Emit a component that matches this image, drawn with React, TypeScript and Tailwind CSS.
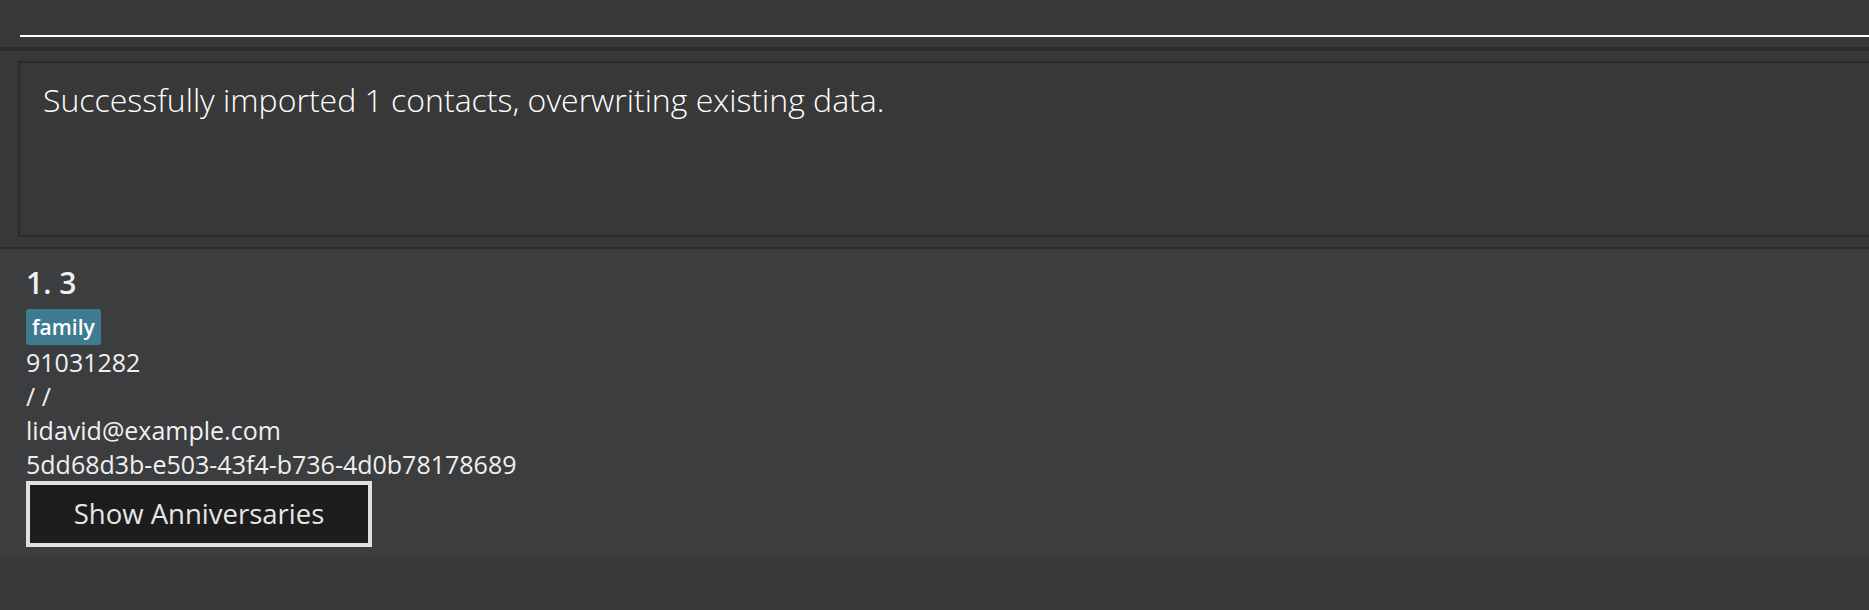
const font = { fontFamily: '"Open Sans", "Noto Sans", sans-serif' };

function CommandBox() {
  return (
    <div className="h-[47px] pl-5">
      <div className="h-[37px] border-b-2 border-white" />
    </div>
  );
}

function ResultDisplay({ message }: { message: string }) {
  return (
    <div className="pl-[18px] pt-[10px] pb-[10px]">
      <div className="h-[176px] border-2 border-r-0 border-[#2b2b2b] pl-[23px] pt-[17px]">
        <p className="text-[32px] leading-[40px] font-light text-white">{message}</p>
      </div>
    </div>
  );
}

interface PersonCardProps {
  index: number;
  person: {
    name: string;
    tags: string[];
    phone: string;
    address: string;
    email: string;
    id: string;
  };
}

function PersonCard({ index, person }: PersonCardProps) {
  return (
    <div className="bg-[#3c3d3f] h-[308px] pl-[26px] pt-[16px]">
      <h2 className="text-[30px] leading-[36px] font-semibold text-[#f0f0f0]">
        {index}. {person.name}
      </h2>
      <div className="flex gap-2 mt-2">
        {person.tags.map((tag) => (
          <span
            key={tag}
            className="h-[36px] px-[6px] rounded-[3px] bg-[#3e7b91] text-white text-[21px] leading-[36px] font-semibold"
          >
            {tag}
          </span>
        ))}
      </div>
      <div className="text-[25px] leading-[34px] text-[#f0f0f0]">
        <p>{person.phone}</p>
        <p>{person.address}</p>
        <p>{person.email}</p>
        <p>{person.id}</p>
      </div>
      <button className="w-[346px] h-[66px] border-4 border-[#e0e0e0] bg-[#1d1d1d] text-[#e6e6e6] text-[27.5px] leading-none">
        Show Anniversaries
      </button>
    </div>
  );
}

export default function App() {
  const person = {
    name: '3',
    tags: ['family'],
    phone: '91031282',
    address: '/ /',
    email: 'lidavid@example.com',
    id: '5dd68d3b-e503-43f4-b736-4d0b78178689',
  };

  return (
    <div className="w-full h-[610px] bg-[#383838] flex flex-col" style={font}>
      <CommandBox />
      <div className="h-[4px] bg-[#2b2b2b]" />
      <ResultDisplay message="Successfully imported 1 contacts, overwriting existing data." />
      <div className="h-[2px] bg-[#2b2b2b]" />
      <PersonCard index={1} person={person} />
    </div>
  );
}
